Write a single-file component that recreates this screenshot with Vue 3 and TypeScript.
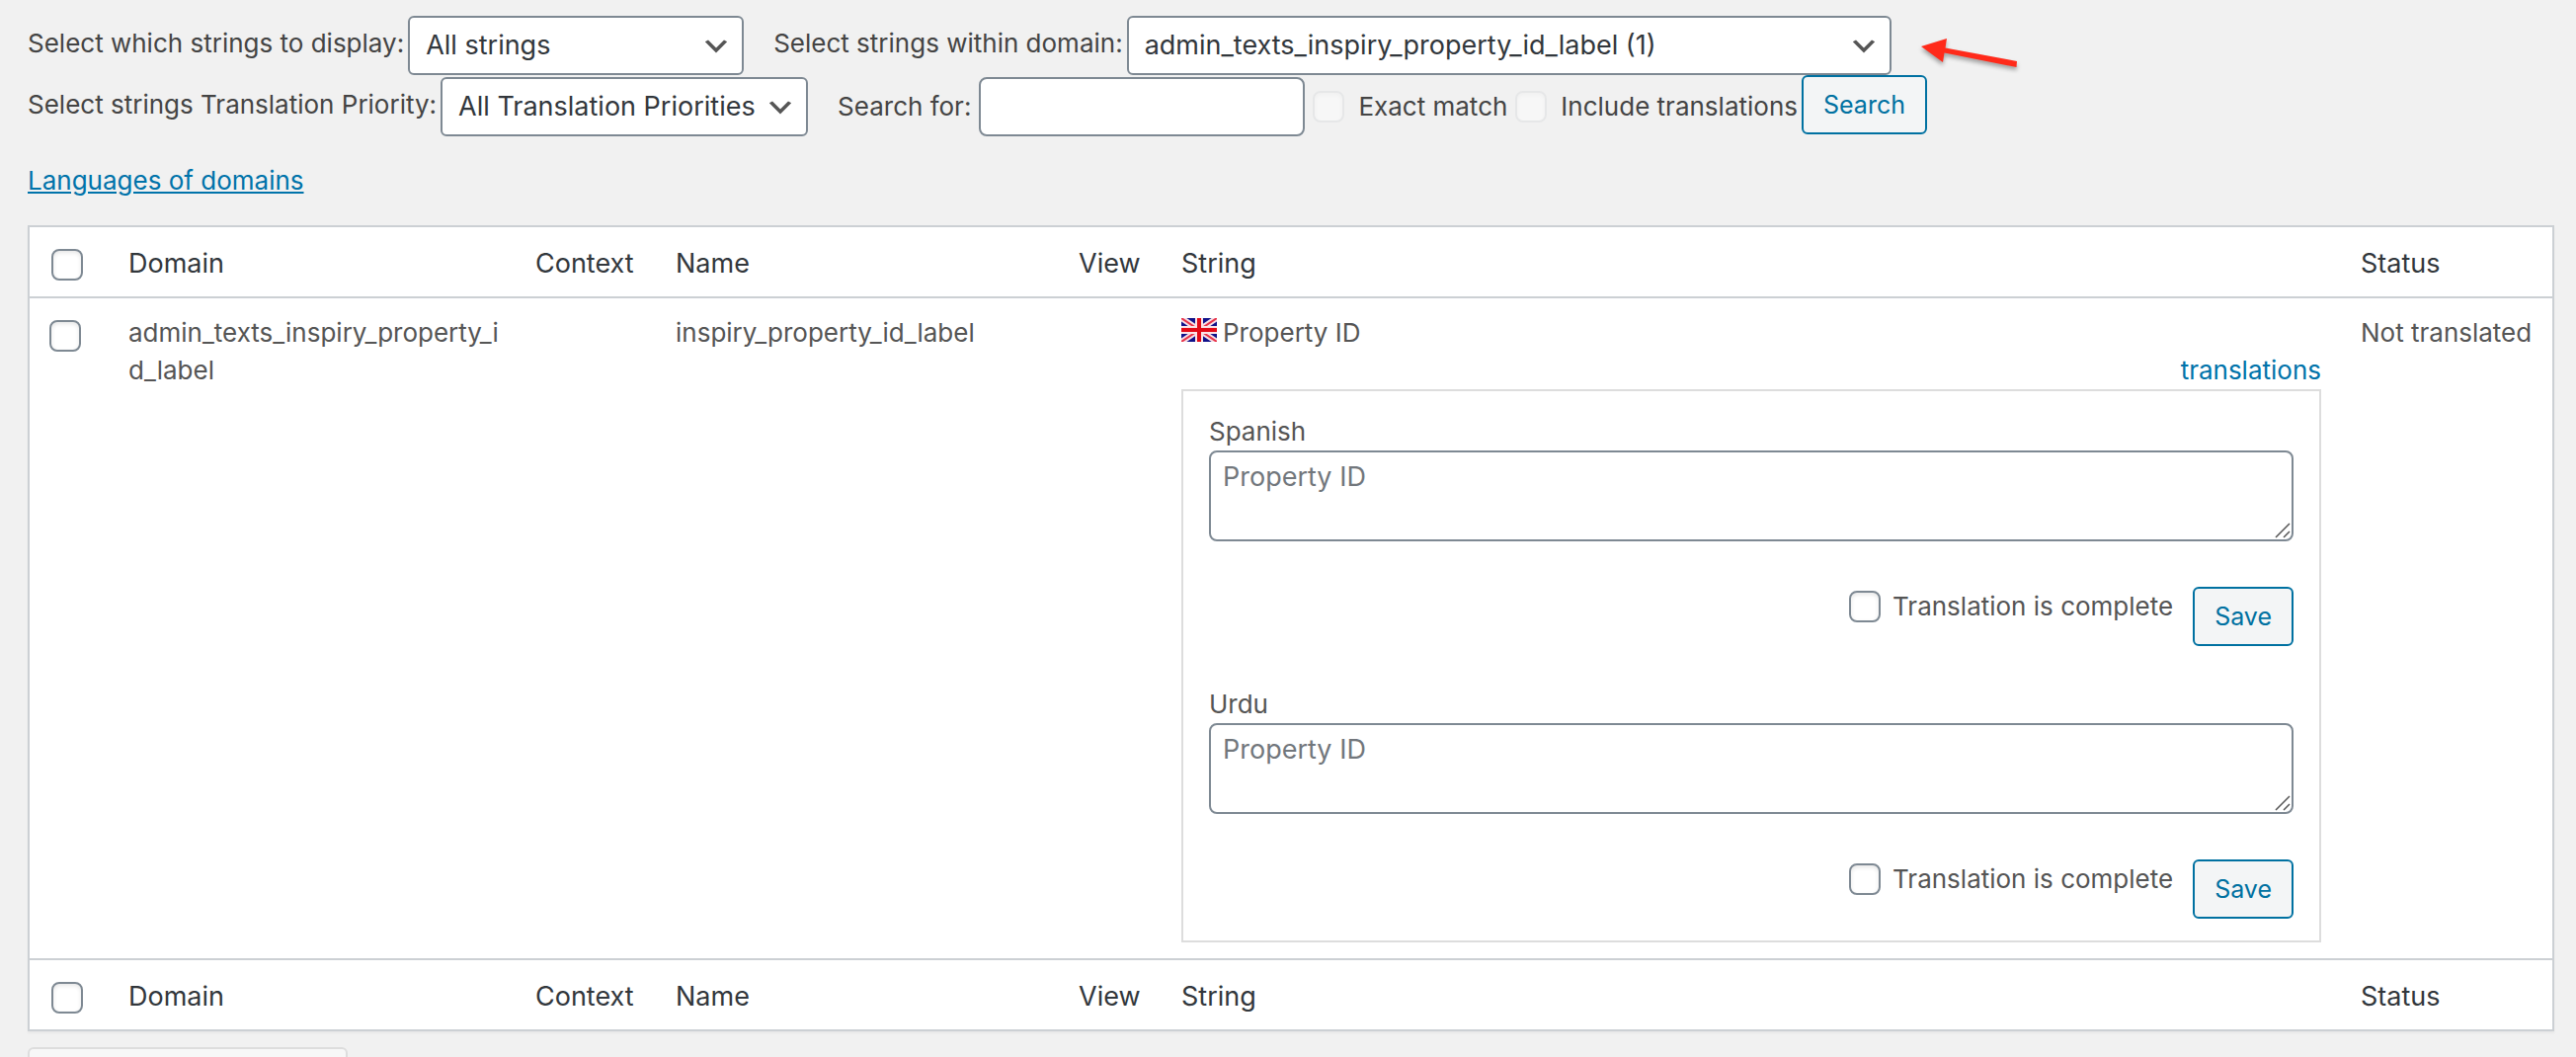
<script setup lang="ts">
import { ref } from 'vue'

interface Column {
  key: string
  label: string
}

interface Translation {
  code: string
  language: string
  value: string
  complete: boolean
}

const columns: Column[] = [
  { key: 'domain', label: 'Domain' },
  { key: 'context', label: 'Context' },
  { key: 'name', label: 'Name' },
  { key: 'view', label: 'View' },
  { key: 'string', label: 'String' },
  { key: 'status', label: 'Status' },
]

const translations = ref<Translation[]>([
  { code: 'es', language: 'Spanish', value: '', complete: false },
  { code: 'ur', language: 'Urdu', value: '', complete: false },
])

const original = 'Property ID'
const search = ref('')
const rowSelected = ref(false)
const allSelected = ref(false)
</script>

<template>
  <main class="page">
    <form class="filters" @submit.prevent>
      <div class="filter-row">
        <div class="field">
          <label class="lead" for="show">Select which strings to display:</label>
          <select id="show" class="control show">
            <option>All strings</option>
          </select>
        </div>
        <div class="field">
          <label class="lead" for="domain">Select strings within domain:</label>
          <select id="domain" class="control domain">
            <option>admin_texts_inspiry_property_id_label (1)</option>
          </select>
        </div>
        <svg class="pointer" width="108" height="44" viewBox="0 0 108 44" aria-hidden="true">
          <path d="M4 15 L30 7 L28.500 16.500 L101 30 L100.500 36 L27.500 21.500 L26 31 Z" fill="#ff2a1a" />
        </svg>
      </div>

      <div class="filter-row second">
        <div class="field">
          <label class="lead" for="priority">Select strings Translation Priority:</label>
          <select id="priority" class="control priority">
            <option>All Translation Priorities</option>
          </select>
        </div>
        <div class="field search-field">
          <label for="search">Search for:</label>
          <input id="search" v-model="search" class="control search" type="text" />
          <label class="check"><input type="checkbox" disabled /> Exact match</label>
          <label class="check"><input type="checkbox" disabled /> Include translations</label>
          <button class="button submit" type="submit">Search</button>
        </div>
      </div>
    </form>

    <p class="languages"><a href="#languages">Languages of domains</a></p>

    <table class="strings">
      <colgroup>
        <col class="c-check" />
        <col v-for="column in columns" :key="column.key" :class="'c-' + column.key" />
      </colgroup>
      <thead>
        <tr>
          <td class="pick"><input v-model="allSelected" type="checkbox" /></td>
          <th v-for="column in columns" :key="column.key" scope="col">{{ column.label }}</th>
        </tr>
      </thead>
      <tbody>
        <tr>
          <td class="pick"><input v-model="rowSelected" type="checkbox" /></td>
          <td class="break">admin_texts_inspiry_property_id_label</td>
          <td></td>
          <td>inspiry_property_id_label</td>
          <td></td>
          <td>
            <div class="original">
              <svg class="flag" width="36" height="24" viewBox="0 0 36 24" aria-hidden="true">
                <rect width="36" height="24" fill="#10128a" />
                <path d="M0 0 L36 24 M36 0 L0 24" stroke="#f6dfe6" stroke-width="6" />
                <path d="M0 0 L36 24 M36 0 L0 24" stroke="#e8344a" stroke-width="2" />
                <path d="M18 0 V24 M0 12 H36" stroke="#fbe3e6" stroke-width="8" />
                <path d="M18 0 V24 M0 12 H36" stroke="#e30a17" stroke-width="4" />
              </svg>
              {{ original }}
            </div>
            <div class="toggle"><a href="#translations">translations</a></div>
            <div class="panel">
              <section v-for="item in translations" :key="item.code" class="translation">
                <label class="language" :for="'text-' + item.code">{{ item.language }}</label>
                <textarea :id="'text-' + item.code" v-model="item.value" :placeholder="original"></textarea>
                <div class="actions">
                  <label class="complete">
                    <input v-model="item.complete" type="checkbox" /> Translation is complete
                  </label>
                  <button class="button" type="button">Save</button>
                </div>
              </section>
            </div>
          </td>
          <td>Not translated</td>
        </tr>
      </tbody>
      <tfoot>
        <tr>
          <td class="pick"><input v-model="allSelected" type="checkbox" /></td>
          <th v-for="column in columns" :key="column.key" scope="col">{{ column.label }}</th>
        </tr>
      </tfoot>
    </table>

    <button class="bulk" type="button" disabled></button>
  </main>
</template>

<style>
body {
  margin: 0;
  background: #f1f1f1;
}
</style>

<style scoped>
.page {
  box-sizing: border-box;
  height: 100vh;
  overflow: hidden;
  padding: 16px 22px 0 28px;
  background: #f1f1f1;
  color: #444;
  font-family: Inter, Roboto, sans-serif;
  font-size: 26px;
  line-height: 38px;
}

.page * {
  box-sizing: border-box;
}

a {
  color: #0073aa;
}

.filter-row {
  display: flex;
  align-items: center;
  gap: 30px;
  white-space: nowrap;
}

.filter-row.second {
  align-items: stretch;
  height: 62px;
}

.second .field {
  padding-top: 2px;
}

.field {
  display: flex;
  align-items: center;
  gap: 4px;
}

.search-field {
  gap: 8px;
}

.lead {
  padding-bottom: 4px;
}

.control {
  height: 60px;
  margin: 0;
  padding: 0 48px 0 16px;
  border: 2px solid #7e8993;
  border-radius: 6px;
  background-color: #fff;
  color: #32373c;
  font-family: inherit;
  font-size: 27px;
  line-height: 38px;
}

select.control {
  appearance: none;
  background-image: url("data:image/svg+xml,%3Csvg xmlns='http://www.w3.org/2000/svg' width='20' height='20'%3E%3Cpath d='M5 6l5 5 5-5 2 1-7 7-7-7 2-1z' fill='%23555'/%3E%3C/svg%3E");
  background-repeat: no-repeat;
  background-position: right 10px top 55%;
  background-size: 32px 32px;
}

.show {
  width: 340px;
}

.domain {
  width: 774px;
}

.priority {
  width: 372px;
  padding-right: 40px;
}

.search {
  width: 330px;
  padding: 0 16px;
  border-radius: 8px;
}

.pointer {
  flex: none;
  margin-top: 16px;
  margin-left: -4px;
  filter: drop-shadow(0 3px 2px rgba(0, 0, 0, 0.35));
}

input[type='checkbox'] {
  appearance: none;
  flex: none;
  display: block;
  width: 32px;
  height: 32px;
  margin: 0;
  border: 2px solid #7e8993;
  border-radius: 8px;
  background: #fff;
  box-shadow: inset 0 2px 4px rgba(0, 0, 0, 0.1);
}

input[type='checkbox']:disabled {
  border-color: #e6e7e8;
  background: #f7f7f7;
  box-shadow: inset 0 2px 4px rgba(0, 0, 0, 0.03);
}

.check,
.complete {
  display: flex;
  align-items: center;
  gap: 14px;
}

.button {
  height: 60px;
  margin: 0;
  padding: 0 20px;
  border: 2px solid #0071a1;
  border-radius: 6px;
  background: #f3f5f6;
  color: #0071a1;
  font-family: inherit;
  font-size: 25px;
  line-height: 38px;
}

.submit {
  align-self: flex-start;
  margin: -2px 0 0 -4px;
}

.languages {
  margin: 26px 0;
}

.strings {
  width: 100%;
  table-layout: fixed;
  border: 2px solid #ccd0d4;
  border-spacing: 0;
  background: #fff;
  box-shadow: 0 2px 2px rgba(0, 0, 0, 0.04);
  color: #555;
}

.c-check {
  width: 84px;
}

.c-domain {
  width: 412px;
}

.c-context {
  width: 142px;
}

.c-name {
  width: 408px;
}

.c-view {
  width: 104px;
}

.c-status {
  width: 210px;
}

th,
td {
  padding: 16px 24px 16px 16px;
  text-align: left;
  vertical-align: top;
  white-space: nowrap;
}

th {
  padding-top: 18px;
  padding-bottom: 14px;
  color: #32373c;
  font-size: 27px;
  font-weight: 400;
}

thead th,
thead td {
  border-bottom: 2px solid #ccd0d4;
}

tfoot th,
tfoot td {
  border-top: 2px solid #ccd0d4;
}

.pick {
  padding: 22px 0 0 22px;
}

tbody .pick {
  padding-left: 20px;
}

.break {
  padding-right: 16px;
  white-space: normal;
  overflow-wrap: anywhere;
}

.original {
  display: flex;
  gap: 6px;
}

.flag {
  margin-top: 4px;
}

.toggle {
  text-align: right;
}

.toggle a {
  text-decoration: none;
}

.panel {
  padding: 22px 26px;
  border: 2px solid #ddd;
}

.translation + .translation {
  margin-top: 40px;
}

.language {
  display: block;
}

textarea {
  display: block;
  width: 100%;
  height: 92px;
  margin: 0;
  padding: 6px 12px;
  border: 2px solid #7e8993;
  border-radius: 8px;
  background: #fff url("data:image/svg+xml,%3Csvg xmlns='http://www.w3.org/2000/svg' width='16' height='16'%3E%3Cpath d='M1 15L15 1M9 15L15 9' stroke='%23555' stroke-width='1.5'/%3E%3C/svg%3E") no-repeat right 1px bottom 1px;
  color: #32373c;
  font-family: inherit;
  font-size: 27px;
  line-height: 38px;
  resize: none;
}

textarea::placeholder {
  color: #72777c;
  opacity: 1;
}

.actions {
  display: flex;
  justify-content: flex-end;
  align-items: flex-start;
  gap: 20px;
  margin-top: 46px;
}

.complete {
  gap: 12px;
  height: 40px;
}

.bulk {
  display: block;
  width: 324px;
  height: 60px;
  margin: 16px 0 0;
  border: 2px solid #ddd;
  border-radius: 6px;
  background: #f7f7f7;
}
</style>
